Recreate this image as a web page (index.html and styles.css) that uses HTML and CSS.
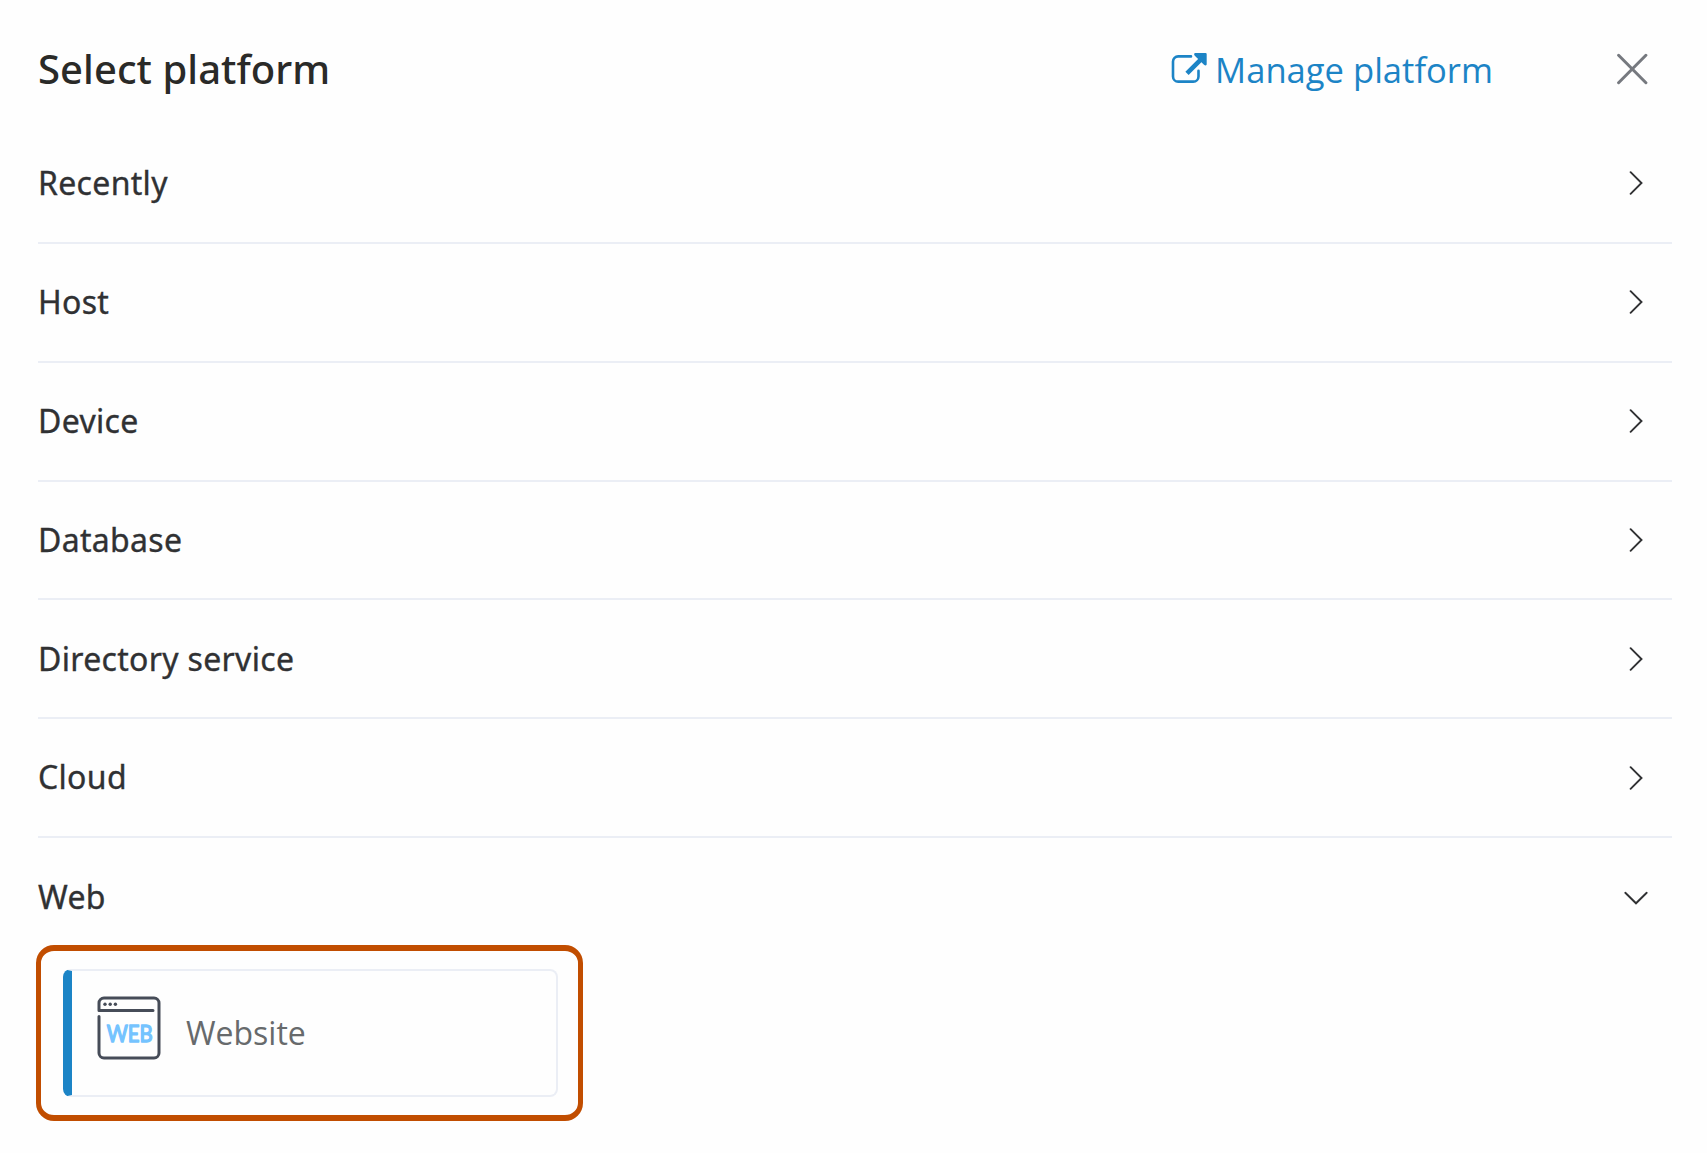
FILE: index.html
```html
<!DOCTYPE html>
<html lang="en">
<head>
<meta charset="utf-8">
<title>Select platform</title>
<link rel="stylesheet" href="styles.css">
</head>
<body>
<main class="drawer">
  <header class="header">
    <h1 class="title">Select platform</h1>
    <a class="manage">
      <svg class="manage-icon" width="36" height="31" viewBox="0 0 36 31" fill="none" stroke="currentColor">
        <path d="M20 3.400H7.200a5.200 5.200 0 0 0-5.200 5.200v14.800a5.200 5.200 0 0 0 5.200 5.200h15.100a5.200 5.200 0 0 0 5.200-5.200v-5.600" stroke-width="2.600" stroke-linecap="round"/>
        <path d="M16 20.300L30 6.300" stroke-width="4.600"/>
        <path d="M24 0H34.500Q35.700 0 35.700 1.200V11.500Q34.800 13.300 33 11.700L23.800 2.800Q22.300 0.600 24 0z" fill="currentColor" stroke="none"/>
      </svg>
      <span class="manage-text">Manage platform</span>
    </a>
    <svg class="close" width="32" height="32" viewBox="0 0 32 32"><path d="M2.600 2.300L29.900 29.700M29.900 2.300L2.600 29.700"/></svg>
  </header>
  <section class="list">
    <div class="row"><span>Recently</span><svg class="chevron" width="24" height="24" viewBox="0 0 24 24"><path d="M6.600 1.200L17.500 12L6.600 22.800"/></svg></div>
    <div class="row"><span>Host</span><svg class="chevron" width="24" height="24" viewBox="0 0 24 24"><path d="M6.600 1.200L17.500 12L6.600 22.800"/></svg></div>
    <div class="row"><span>Device</span><svg class="chevron" width="24" height="24" viewBox="0 0 24 24"><path d="M6.600 1.200L17.500 12L6.600 22.800"/></svg></div>
    <div class="row"><span>Database</span><svg class="chevron" width="24" height="24" viewBox="0 0 24 24"><path d="M6.600 1.200L17.500 12L6.600 22.800"/></svg></div>
    <div class="row"><span>Directory service</span><svg class="chevron" width="24" height="24" viewBox="0 0 24 24"><path d="M6.600 1.200L17.500 12L6.600 22.800"/></svg></div>
    <div class="row"><span>Cloud</span><svg class="chevron" width="24" height="24" viewBox="0 0 24 24"><path d="M6.600 1.200L17.500 12L6.600 22.800"/></svg></div>
    <div class="row open"><span>Web</span><svg class="chevron" width="24" height="24" viewBox="0 0 24 24"><path d="M1.300 6.800L12 17.300L22.700 6.800"/></svg></div>
  </section>
  <div class="highlight">
    <div class="card">
      <svg class="web-icon" width="64" height="64" viewBox="0 0 64 64" fill="none" stroke="#464c58" stroke-width="3" stroke-linecap="round" stroke-linejoin="round">
        <path d="M56 14.500H2V7a5 5 0 0 1 5-5h50a5 5 0 0 1 5 5v50a5 5 0 0 1-5 5H7a5 5 0 0 1-5-5V20.500"/>
        <g fill="#464c58" stroke="none"><circle cx="8" cy="8.300" r="1.700"/><circle cx="13.200" cy="8.300" r="1.700"/><circle cx="18.400" cy="8.300" r="1.700"/></g>
        <text class="web-text" x="9.700" y="46.200" textLength="46" lengthAdjust="spacingAndGlyphs">WEB</text>
      </svg>
      <span class="card-label">Website</span>
    </div>
  </div>
</main>
</body>
</html>
```
FILE: styles.css
```css
* { box-sizing: border-box; }
body {
  margin: 0;
  background: #fefefe;
  font-family: "Noto Sans", "Open Sans", sans-serif;
  color: #303133;
}
.drawer {
  width: 1707px;
  height: 1153px;
  padding: 14px 35px 0 38px;
  overflow: hidden;
}
.header {
  display: flex;
  align-items: center;
  height: 111px;
}
.title {
  margin: 0;
  flex: 1;
  font-size: 40px;
  font-weight: 500;
  line-height: 56px;
  padding-bottom: 1px;
  letter-spacing: 0.050px;
  color: #2a2a28;
}
.manage {
  display: flex;
  align-items: center;
  gap: 8px;
  color: #1c84c6;
  font-family: "Open Sans", sans-serif;
  font-size: 34.600px;
  line-height: 50px;
}
.manage-icon { margin-bottom: 3px; }
.close {
  margin: 0 24px 1px 123px;
  fill: none;
  stroke: #76797f;
  stroke-width: 3;
  stroke-linecap: round;
}
.row {
  display: flex;
  align-items: center;
  justify-content: space-between;
  height: 118.860px;
  padding-right: 24px;
  border-bottom: 2px solid #ebeef5;
  font-size: 32px;
  font-weight: 400;
}
.row span {
  padding-bottom: 1.600px;
  letter-spacing: 0.320px;
  -webkit-text-stroke: 0.350px #303133;
}
.row.open {
  height: 106.840px;
  padding-top: 14px;
  border-bottom-color: transparent;
}
.chevron {
  fill: none;
  stroke: #303133;
  stroke-width: 1.900;
  stroke-linecap: round;
}
.highlight {
  width: 547px;
  height: 176px;
  margin-left: -2px;
  padding: 18px 20px 18px 22px;
  border: 6px solid #c14d00;
  border-width: 6px 5px;
  border-radius: 18px;
}
.card {
  display: flex;
  align-items: center;
  height: 128px;
  padding-left: 25px;
  border: 2px solid #ebeef5;
  border-left: 9px solid #1c84c6;
  border-radius: 8px;
}
.web-icon { margin-top: -10px; }
.web-text {
  font-family: Lato, sans-serif;
  font-size: 23px;
  font-weight: 400;
  fill: #74c3ff;
  stroke: #74c3ff;
  stroke-width: 1.400px;
}
.card-label {
  margin-left: 25px;
  font-family: "Open Sans", sans-serif;
  font-size: 32px;
  color: #676a6c;
}
```
